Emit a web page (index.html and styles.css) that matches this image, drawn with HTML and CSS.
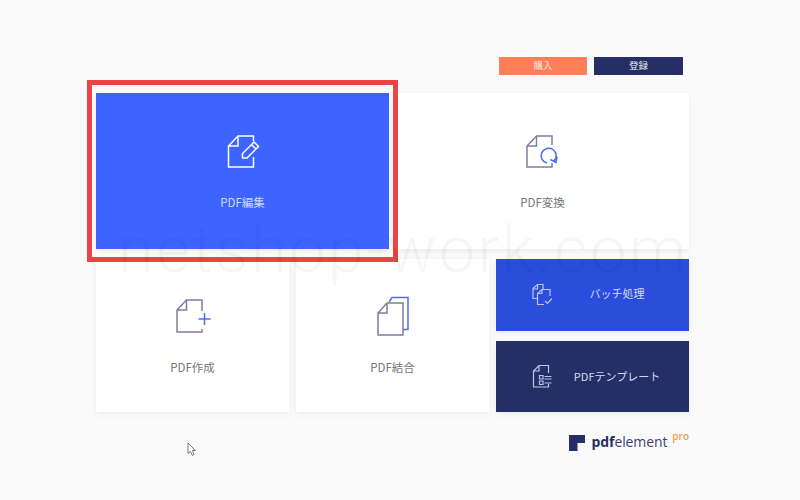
FILE: index.html
```html
<!DOCTYPE html>
<html lang="ja">
<head>
	<meta charset="utf-8">
	<title>PDFelement</title>
	<link rel="stylesheet" href="styles.css">
</head>
<body>
	<div class="page">
		<div class="top">
			<a class="btn buy">購入</a>
			<a class="btn register">登録</a>
		</div>

		<div class="menu">
			<div class="card wide active">
				<svg class="icon" viewBox="0 0 40 40">
					<path d="M30.500 12V7H15L5.500 17V38H30.500V28M15 7V17H5.500"/>
					<path d="M19.500 29V24.500L31 13L35.500 17.500L24 29ZM28.500 15.500L33 20"/>
				</svg>
				<div class="label">PDF編集</div>
			</div>
			<div class="card wide">
				<svg class="icon" viewBox="0 0 40 40">
					<path d="M29 16V7H13.500L4 17V38H29V34M13.500 7V17H4"/>
					<path class="accent" d="M31 32A7.500 7.500 0 1 0 24 34M34 27.500L33 33.500L27.500 30.500"/>
				</svg>
				<div class="label">PDF変換</div>
			</div>
			<div class="card">
				<svg class="icon" viewBox="0 0 40 40">
					<path d="M29 16V5H13.500L4 15V37H29V34M13.500 5V15H4"/>
					<path class="accent" d="M25.500 24H37.500M31.500 18V30"/>
				</svg>
				<div class="label">PDF作成</div>
			</div>
			<div class="card">
				<svg class="icon" viewBox="0 0 40 40">
					<path class="accent" d="M16 7L19 2.500H35V34.500H30"/>
					<path d="M30 8V40H5V18L14 8ZM14 8V18H5"/>
				</svg>
				<div class="label">PDF結合</div>
			</div>
			<div class="side">
				<div class="side-card batch">
					<svg class="side-icon" viewBox="0 0 40 40">
						<path d="M17 23.500H13V13.500L17.500 9.500H23V14M17.500 9.500V14H13"/>
						<path d="M17.500 18.500L22 14.500H30V21M17.500 18.500V29.500H24M22 14.500V18.500H17.500"/>
						<path d="M25 26L27.500 28.500L32 23.500"/>
					</svg>
					<div class="side-label">バッチ処理</div>
				</div>
				<div class="side-card template">
					<svg class="side-icon" viewBox="0 0 40 40">
						<path d="M28.500 17V9.500H19L13.500 15V31H28.500V28M19 9.500V15H13.500"/>
						<path d="M19.500 19.500H23V23H19.500ZM19.500 25H23V28.500H19.500ZM24.500 20.500H31.500M24.500 23H31.500M24.500 27H31.500"/>
					</svg>
					<div class="side-label">PDFテンプレート</div>
				</div>
			</div>
		</div>

		<div class="brand">
			<svg class="brand-mark" viewBox="0 0 16 16">
				<path d="M0 0H16V8H8.500V16H0Z"/>
			</svg>
			<span class="brand-name"><b>pdf</b>element</span>
			<span class="brand-pro">pro</span>
		</div>
	</div>

	<div class="frame"></div>
	<div class="watermark">netshop-work.com</div>
	<svg class="cursor" viewBox="0 0 10 15">
		<path d="M1 1V11.500L3.500 9.500L5.500 13.500L7 12.500L5.500 8.500H8.500Z"/>
	</svg>
</body>
</html>
```
FILE: styles.css
```css
body {
	margin: 0;
	width: 800px;
	height: 500px;
	overflow: hidden;
	position: relative;
	background-color: #fafafa;
	font-family: "Noto Sans CJK JP", "Noto Sans", sans-serif;
}

.page {
	width: 593px;
	padding: 57px 0 0 96px;
}

.top {
	display: flex;
	justify-content: flex-end;
	gap: 7px;
	padding-right: 6px;
	margin-bottom: 18px;
}

.btn {
	width: 88px;
	height: 18px;
	line-height: 17px;
	text-align: center;
	font-size: 9.5px;
	color: #f3ece8;
}

.buy {
	background-color: #ff7f58;
}

.register {
	width: 89px;
	background-color: #252f65;
}

.menu {
	display: grid;
	grid-template-columns: repeat(6, 1fr);
	grid-template-rows: 156px 153px;
	gap: 10px 7px;
}

.card {
	grid-column: span 2;
	box-sizing: border-box;
	padding-top: 36px;
	text-align: center;
	background-color: #fff;
	box-shadow: 0 2px 6px rgba(0, 0, 0, 0.06);
}

.wide {
	grid-column: span 3;
}

.active {
	background-color: #3d64ff;
}

.icon {
	display: block;
	width: 40px;
	height: 40px;
	margin: 0 auto;
	overflow: visible;
}

.icon path, .side-icon path {
	fill: none;
	stroke: #7d7f9e;
	stroke-width: 1.5;
}

.icon .accent {
	stroke: #4d6cf0;
}

.active .icon path {
	stroke: #fff;
}

.label {
	margin-top: 24px;
	line-height: 16px;
	font-size: 11.5px;
	color: #777;
}

.wide .label {
	margin-top: 25px;
}

.active .label {
	color: #cdd7ff;
}

.side {
	grid-column: span 2;
	display: flex;
	flex-direction: column;
	gap: 10px;
}

.side-card {
	flex: 1;
	display: flex;
	align-items: center;
	padding: 0 15px 0 24px;
	box-shadow: 0 2px 6px rgba(0, 0, 0, 0.06);
}

.batch {
	background-color: #2a4ddb;
}

.template {
	background-color: #252f65;
}

.side-icon {
	width: 40px;
	height: 40px;
	flex: none;
}

.side-icon path {
	stroke: #bcc5ea;
	stroke-width: 1.2;
}

.side-label {
	flex: 1;
	padding-bottom: 3px;
	text-align: center;
	font-size: 11px;
	color: #d5dbf5;
}

.template .side-label {
	padding-bottom: 1px;
}

.brand {
	display: flex;
	align-items: flex-start;
	justify-content: flex-end;
	margin-top: 20px;
}

.brand-mark {
	width: 16px;
	height: 16px;
	margin: 3px 7px 0 0;
	fill: #252f65;
}

.brand-name {
	line-height: 20px;
	font-family: "Open Sans", sans-serif;
	font-size: 14px;
	letter-spacing: -0.1px;
	color: #3b4470;
}

.brand-name b {
	color: #252f65;
}

.brand-pro {
	margin: -2px 0 0 5px;
	line-height: 12px;
	font-family: "Open Sans", sans-serif;
	font-size: 10px;
	font-weight: 600;
	color: #f0a050;
}

/* overlays */
.frame {
	position: absolute;
	left: 87px;
	top: 80px;
	width: 301px;
	height: 172px;
	border: 5px solid #ec4444;
}

.watermark {
	position: absolute;
	left: 118px;
	top: 217px;
	line-height: 66px;
	font-family: "Roboto", sans-serif;
	font-weight: 300;
	font-size: 65px;
	letter-spacing: 2.4px;
	white-space: nowrap;
	color: rgba(0, 0, 0, 0.035);
}

.cursor {
	position: absolute;
	left: 187px;
	top: 442px;
	width: 10px;
	height: 15px;
	fill: #fff;
	stroke: #555;
	stroke-width: 0.8;
}
```
